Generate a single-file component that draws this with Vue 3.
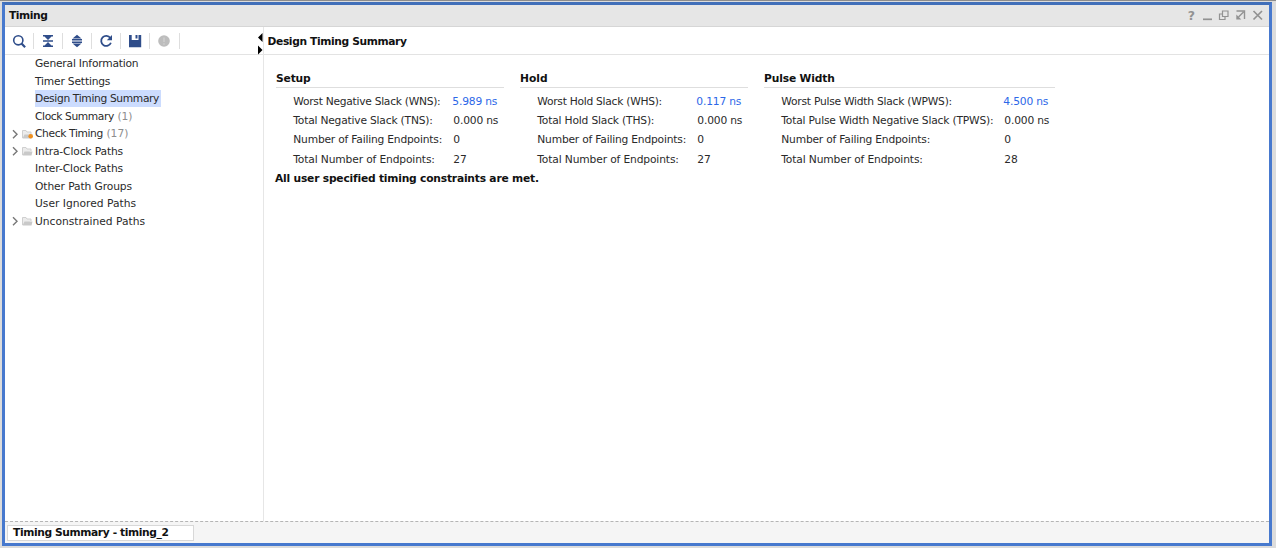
<script setup>
const tree = [
  { label: 'General Information', track: -0.21 },
  { label: 'Timer Settings', track: -0.18 },
  { label: 'Design Timing Summary', track: -0.35, selected: true },
  { label: 'Clock Summary', track: -0.4, count: '(1)' },
  { label: 'Check Timing', track: -0.37, count: '(17)', folder: true, alert: true },
  { label: 'Intra-Clock Paths', track: -0.14, folder: true },
  { label: 'Inter-Clock Paths', track: -0.1 },
  { label: 'Other Path Groups', track: -0.1 },
  { label: 'User Ignored Paths', track: 0 },
  { label: 'Unconstrained Paths', track: 0, folder: true },
]
const groups = [
  { name: 'Setup', key: 'setup', rows: [
    ['Worst Negative Slack (WNS):', '5.989 ns', -0.27],
    ['Total Negative Slack (TNS):', '0.000 ns', -0.2],
    ['Number of Failing Endpoints:', '0', -0.2],
    ['Total Number of Endpoints:', '27', -0.14],
  ] },
  { name: 'Hold', key: 'hold', rows: [
    ['Worst Hold Slack (WHS):', '0.117 ns', -0.27],
    ['Total Hold Slack (THS):', '0.000 ns', -0.18],
    ['Number of Failing Endpoints:', '0', -0.2],
    ['Total Number of Endpoints:', '27', -0.14],
  ] },
  { name: 'Pulse Width', key: 'pulse', rows: [
    ['Worst Pulse Width Slack (WPWS):', '4.500 ns', -0.24],
    ['Total Pulse Width Negative Slack (TPWS):', '0.000 ns', -0.19],
    ['Number of Failing Endpoints:', '0', -0.2],
    ['Total Number of Endpoints:', '28', -0.14],
  ] },
]
const spacing = (track) => ({ letterSpacing: `${track}px` })
</script>

<template>
  <div class="frame">
    <div class="window">
      <header class="titlebar">
        <span class="title">Timing</span>
        <div class="controls">
          <span class="help">?</span>
          <svg width="66" height="16" viewBox="0 0 66 16" fill="none" stroke="#929292" stroke-width="1.4">
            <path d="M3 12.300h9" stroke-width="1.700" />
            <path d="M22.500 4h5.500v5.500h-5.500zM22.500 7h-3v5.500h5.500v-3" stroke-width="1.200" />
            <path d="M36.500 4h8v8M43.500 5l-5 5" />
            <path d="M36.300 7.500v5h5z" fill="#929292" stroke="none" />
            <path d="M53.500 4l8.500 8.500M62 4l-8.500 8.500" stroke-width="1.700" />
          </svg>
        </div>
      </header>

      <main class="body">
        <aside class="side">
          <div class="toolbar">
            <div class="tool">
              <svg width="16" height="16" viewBox="0 0 16 16" fill="none" stroke="#2f4d8a">
                <circle cx="7.300" cy="7.300" r="4.600" stroke-width="1.600" />
                <path d="M10.500 10.500l3.600 3.700" stroke-width="2.200" />
              </svg>
            </div>
            <div class="tool">
              <svg width="16" height="16" viewBox="0 0 16 16" fill="#2f4d8a">
                <path d="M3 2h10v1.600h-10zM4.500 3.600h7l-3.500 3.400zM3 7.200h10v1.600h-10zM4.500 12.400h7l-3.500-3.400zM3 12.400h10v1.600h-10z" />
              </svg>
            </div>
            <div class="tool">
              <svg width="16" height="16" viewBox="0 0 16 16" fill="#2f4d8a">
                <path d="M8 1.800l4.500 3.700h-9zM3 6.100h10v1.400h-10zM3 8.500h10v1.400h-10zM3.500 10.500h9l-4.500 3.700z" />
              </svg>
            </div>
            <div class="tool">
              <svg width="16" height="16" viewBox="0 0 16 16" fill="none" stroke="#2f4d8a" stroke-width="1.800">
                <path d="M12.300 5a5 5 0 1 0 .6 4.700" />
                <path d="M14 2v5.200h-5.200z" fill="#2f4d8a" stroke="none" />
              </svg>
            </div>
            <div class="tool">
              <svg width="16" height="16" viewBox="0 0 16 16">
                <path d="M2 2h2.700v5h6.800v-5h2.700v12.200h-12.200zM8.500 2h2v3.500h-2z" fill="#2f4d8a" />
              </svg>
            </div>
            <div class="tool">
              <svg width="16" height="16" viewBox="0 0 16 16">
                <circle cx="8" cy="8" r="5.800" fill="#bdbdbd" />
                <path d="M8 4.500v4.500M8 10.300v1.400" stroke="#d2d2d2" stroke-width="1.200" />
              </svg>
            </div>
            <svg class="arrows" width="6" height="22" viewBox="0 0 6 22">
              <path d="M5.500 0v9l-4.500-4.500zM1 12.500v9l4.500-4.500z" fill="#000" />
            </svg>
          </div>
          <div class="tree">
            <div v-for="item in tree" :key="item.label" class="node">
              <span class="marks">
                <svg v-if="item.folder" width="30" height="16" viewBox="0 0 30 16">
                  <path d="M8 4.300l4 4l-4 4" fill="none" stroke="#777" stroke-width="1.400" />
                  <path d="M17.500 12v-7.500h3.500l1 1.500h4v2" fill="#ececec" stroke="#cfcfcf" />
                  <path d="M17.500 12.500l2-4h8l-1 4z" fill="#c9c9c9" />
                  <circle v-if="item.alert" cx="25.700" cy="10.300" r="2.300" fill="#f0901e" />
                </svg>
              </span>
              <span class="label" :class="{ selected: item.selected }" :style="spacing(item.track)">{{ item.label }}</span>
              <span v-if="item.count" class="count">{{ item.count }}</span>
            </div>
          </div>
        </aside>

        <section class="content">
          <h1 class="heading">Design Timing Summary</h1>
          <div class="groups">
            <div v-for="g in groups" :key="g.key" class="group" :class="g.key">
              <h2>{{ g.name }}</h2>
              <div v-for="(r, i) in g.rows" :key="r[0]" class="metric">
                <span class="name" :style="spacing(r[2])">{{ r[0] }}</span>
                <span class="value" :class="{ link: i === 0 }">{{ r[1] }}</span>
              </div>
            </div>
          </div>
          <p class="result">All user specified timing constraints are met.</p>
        </section>
      </main>

      <footer class="footer">
        <div class="tab">Timing Summary - timing_2</div>
      </footer>
    </div>
  </div>
</template>

<style>
body { overflow: hidden; }
</style>

<style scoped>
.frame {
  box-sizing: border-box;
  width: 1276px;
  height: 548px;
  padding: 1px 4px 2px 2px;
  background: #dcdcdc;
  border-top: 1px solid #8c8c8c;
  font: 10.7px "DejaVu Sans", sans-serif;
  color: #2a2a2a;
  white-space: pre;
}
.window {
  box-sizing: border-box;
  width: 1270px;
  height: 544px;
  display: flex;
  flex-direction: column;
  border: 3px solid #4779ce;
  border-top-color: #416fb9;
  background: #fff;
}
.titlebar {
  box-sizing: border-box;
  height: 22px;
  flex: none;
  display: flex;
  justify-content: space-between;
  align-items: center;
  padding: 0 0 1px 4px;
  background: #e6e6e6;
  border-bottom: 1px solid #d6d6d6;
}
.title { font-weight: bold; color: #111; letter-spacing: -0.43px; }
.controls { display: flex; align-items: center; gap: 5px; padding-right: 3px; }
.help { font-weight: bold; font-size: 12.5px; color: #929292; }
.body { flex: 1; min-height: 0; display: flex; }
.side {
  box-sizing: border-box;
  width: 259px;
  border-right: 1px solid #e6e6e6;
}
.toolbar {
  box-sizing: border-box;
  height: 28px;
  display: flex;
  align-items: center;
  border-bottom: 1px solid #e3e3e3;
}
.tool {
  box-sizing: border-box;
  width: 29.1px;
  height: 16px;
  padding-left: 5.5px;
  border-right: 1px solid #dedede;
}
.arrows { margin: 6px 0 0 auto; }
.node { display: flex; height: 17.5px; align-items: center; }
.marks { width: 30px; height: 16px; }
.label { height: 17px; line-height: 17px; }
.selected { background: #ccdcfe; padding-right: 2px; }
.count { color: #8e8e8e; margin-left: 3.5px; }
.content { flex: 1; min-width: 0; }
.heading {
  box-sizing: border-box;
  height: 28px;
  margin: 0;
  padding-left: 3.5px;
  border-bottom: 1px solid #e3e3e3;
  font-size: 10.7px;
  line-height: 29px;
  letter-spacing: -0.37px;
  color: #111;
}
.groups { display: flex; gap: 16px; padding: 16px 0 0 12px; }
.group h2 {
  box-sizing: border-box;
  height: 17px;
  margin: 0 0 4px;
  border-bottom: 1px solid #dedede;
  font-size: 10.7px;
  line-height: 16px;
  color: #111;
}
.setup { width: 228px; }
.setup h2 { letter-spacing: -0.16px; }
.hold { width: 228px; }
.pulse { width: 291px; }
.pulse h2 { letter-spacing: -0.14px; }
.metric { display: flex; height: 19.2px; line-height: 19px; padding-left: 17.3px; }
.name { width: 160px; }
.value { letter-spacing: -0.17px; }
.pulse .name { width: 223px; }
.link { color: #2c67e8; margin-left: -1px; }
.result { margin: 1px 0 0 11px; font-weight: bold; line-height: 18px; letter-spacing: -0.2px; color: #111; }
.footer {
  box-sizing: border-box;
  height: 22px;
  flex: none;
  padding: 3px 0 0 2px;
  border-top: 1px dashed #b5b5b5;
  background: #f5f5f5;
}
.tab {
  box-sizing: border-box;
  width: 187px;
  height: 16px;
  padding-left: 5px;
  border: 1px solid #d8d8d8;
  background: #fff;
  font-weight: bold;
  line-height: 14px;
  letter-spacing: -0.39px;
  color: #111;
}
</style>
